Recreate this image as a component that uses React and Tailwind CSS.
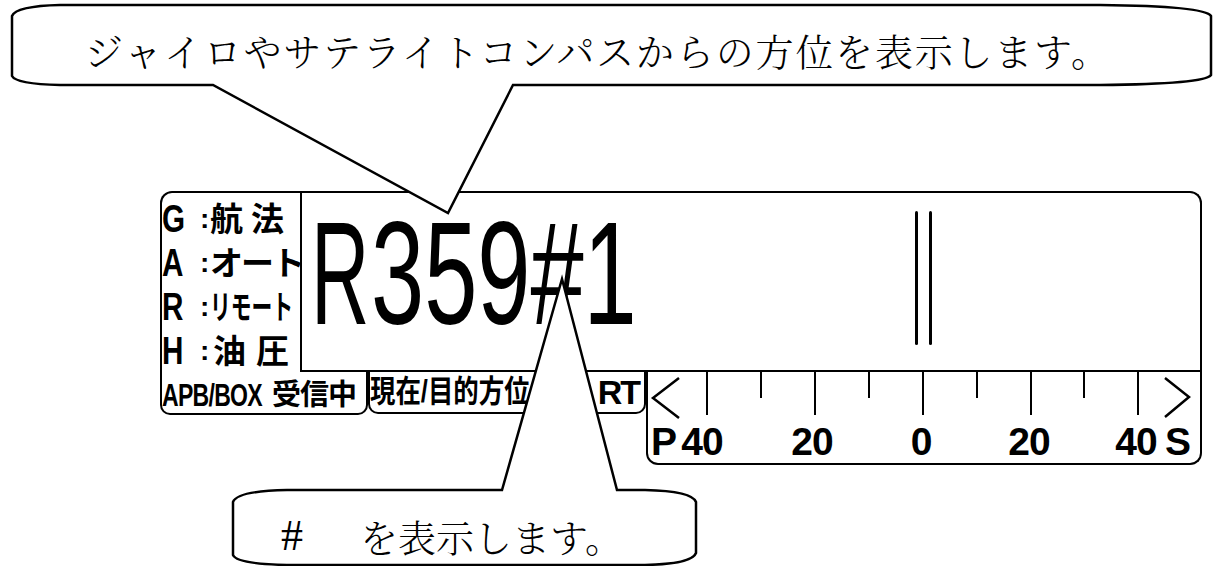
import React from "react";

const modes = [
  { key: "G", label: "航法", cls: "tracking-[8px]" },
  { key: "A", label: "オート", cls: "tracking-[-2px]" },
  { key: "R", label: "リモート", cls: "origin-left scale-x-[0.63] tracking-[0px]" },
  { key: "H", label: "油圧", cls: "pl-[3px] tracking-[10px]" },
];

const minorTicks = [113, 221, 329, 436];
const majorTicks = [59, 167, 275, 383, 490];

function ModeRow({ mode }) {
  return (
    <div className="flex h-[44px] items-center whitespace-nowrap">
      <span className="inline-block w-[38px] shrink-0">
        <span className="inline-block origin-left scale-x-[0.78] text-[38px] font-bold leading-none">
          {mode.key}
        </span>
      </span>
      <span className="w-[10px] shrink-0 text-[28px] font-bold leading-none">:</span>
      <span className={`inline-block text-[33px] font-bold leading-none ${mode.cls}`}>
        {mode.label}
      </span>
    </div>
  );
}

function ScaleBar() {
  return (
    <div className="flex h-[93px] flex-1 flex-col rounded-b-[12px] border-x-2 border-b-2 border-black">
      <svg width="552" height="47" className="shrink-0">
        {majorTicks.map((x) => (
          <line key={x} x1={x} y1="0" x2={x} y2="43" stroke="black" strokeWidth="2" />
        ))}
        {minorTicks.map((x) => (
          <line key={x} x1={x} y1="0" x2={x} y2="26" stroke="black" strokeWidth="2" />
        ))}
        <polyline points="31,6 5,26 31,46" fill="none" stroke="black" strokeWidth="2.5" />
        <polyline points="517,6 541,25 517,45" fill="none" stroke="black" strokeWidth="2.5" />
      </svg>
      <div className="flex h-[44px] items-center whitespace-nowrap text-[39px] font-bold leading-none tracking-[-1px]">
        <span className="w-[27px] shrink-0 pl-[3px]">P</span>
        <span className="w-[54px] shrink-0 text-center">40</span>
        <span className="w-[166px] shrink-0 text-center">20</span>
        <span className="w-[52px] shrink-0 text-center">0</span>
        <span className="w-[164px] shrink-0 text-center">20</span>
        <span className="w-[50px] shrink-0 text-center">40</span>
        <span className="shrink-0 pl-[4px]">S</span>
      </div>
    </div>
  );
}

function HeadingPanel() {
  return (
    <div className="ml-[160px] w-[1042px] font-['Liberation_Sans','Noto_Sans_CJK_JP',sans-serif]">
      <div className="flex h-[181px] rounded-t-[12px] border-x-2 border-t-2 border-black">
        <div className="w-[140px] shrink-0 border-r-2 border-black pt-[4px]">
          {modes.map((m) => (
            <ModeRow key={m.key} mode={m} />
          ))}
        </div>
        <div className="flex flex-1 items-start border-b-2 border-black">
          <div className="ml-[9px] mt-[7px] flex w-[320px] shrink-0 whitespace-nowrap text-[147px] leading-none">
            <span className="inline-block w-[60px] shrink-0">
              <span className="inline-block origin-left scale-x-[0.55]">R</span>
            </span>
            <span className="inline-block w-[260px] shrink-0">
              <span className="inline-block origin-left scale-x-[0.65]">359#1</span>
            </span>
          </div>
          <div className="ml-[284px] mt-[18px] flex gap-[11px]">
            <div className="h-[134px] w-[3px] rounded-full bg-black" />
            <div className="h-[134px] w-[3px] rounded-full bg-black" />
          </div>
        </div>
      </div>
      <div className="flex items-start">
        <div className="flex h-[43px] w-[208px] shrink-0 items-center whitespace-nowrap rounded-b-[10px] border-x-2 border-b-2 border-black pt-[6px]">
          <span className="inline-block w-[110px] shrink-0">
            <span className="inline-block origin-left scale-x-[0.72] text-[32px] font-bold leading-none tracking-[-1px]">
              APB/BOX
            </span>
          </span>
          <span className="text-[29px] font-bold leading-none tracking-[-1px]">受信中</span>
        </div>
        <div className="flex h-[42px] w-[278px] shrink-0 items-center whitespace-nowrap rounded-b-[10px] border-x-2 border-b-2 border-black">
          <span className="inline-block w-[160px] shrink-0">
            <span className="inline-block origin-left scale-x-[0.82] text-[31px] font-bold leading-none">
              現在/目的方位
            </span>
          </span>
          <span className="ml-auto mr-[5px] text-[34px] font-bold leading-none tracking-[-2px]">RT</span>
        </div>
        <ScaleBar />
      </div>
    </div>
  );
}

export default function App() {
  return (
    <div className="relative h-[566px] w-[1214px] overflow-hidden bg-white text-black">
      <div className="relative z-20 h-[191px] pl-[85px] pt-[31px]">
        <p className="whitespace-nowrap font-['Noto_Serif_CJK_JP','Noto_Sans_CJK_JP',serif] text-[38px] font-light leading-[38px] tracking-[1.8px]">
          ジャイロやサテライトコンパスからの方位を表示します。
        </p>
      </div>

      <HeadingPanel />

      <div className="relative z-20 mt-[52px] flex h-[38px] items-center whitespace-nowrap pl-[281px]">
        <span className="w-[79px] shrink-0 font-['Liberation_Serif',serif] text-[44px] leading-none">#</span>
        <span className="font-['Noto_Serif_CJK_JP','Noto_Sans_CJK_JP',serif] text-[38px] font-light leading-[38px]">
          を表示します。
        </span>
      </div>

      {/* callout bubbles drawn over the panel */}
      <svg
        className="pointer-events-none absolute left-0 top-0 z-10"
        width="1214"
        height="566"
      >
        <path
          d="M 60 5 L 1100 5 Q 1205 6 1211 16 L 1211 75 Q 1205 84 1100 85 L 513 85 L 448 213 L 213 85 L 60 85 Q 16 84 12 76 L 12 16 Q 16 6 60 5 Z"
          fill="white"
          stroke="black"
          strokeWidth="2.5"
          strokeLinejoin="miter"
        />
        <path
          d="M 287 490 L 502 490 L 562 279 L 617 490 L 645 490 Q 692 491 696 502 L 696 553 Q 692 564 645 565 L 287 565 Q 237 564 233 555 L 233 502 Q 237 491 287 490 Z"
          fill="white"
          stroke="black"
          strokeWidth="2.5"
        />
      </svg>
    </div>
  );
}
